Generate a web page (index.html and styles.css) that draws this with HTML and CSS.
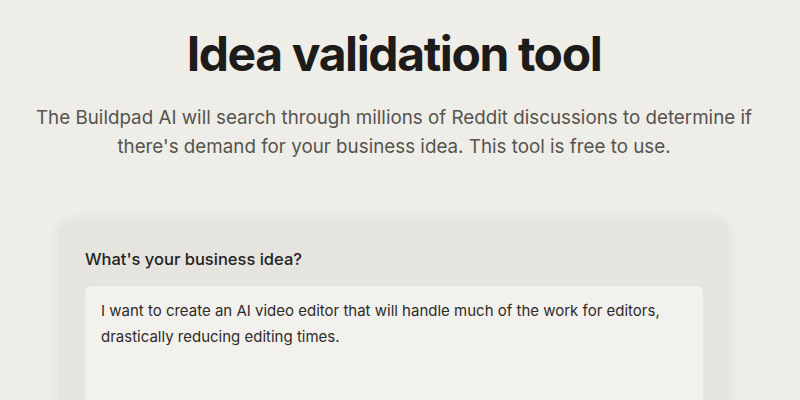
FILE: index.html
```html
<!DOCTYPE html>
<html lang="en">
<head>
<meta charset="utf-8">
<link rel="stylesheet" href="styles.css">
</head>
<body>
<main class="page">
  <h1 class="title">Idea validation tool</h1>
  <p class="lead">The Buildpad AI will search through millions of Reddit discussions to determine if there's demand for your business idea. This tool is free to use.</p>
  <section class="card">
    <label class="label" for="idea">What's your business idea?</label>
    <div class="field" id="idea">I want to create an AI video editor that will handle much of the work for editors, drastically reducing editing times.</div>
  </section>
</main>
</body>
</html>
```
FILE: styles.css
```css
html, body {
  margin: 0;
  padding: 0;
  background: #eeede7;
  height: 100%;
  overflow: hidden;
}
body {
  font-family: Inter, "Open Sans", sans-serif;
  color: #1c1b19;
}
.page {
  display: flex;
  flex-direction: column;
  align-items: center;
  padding: 24px 12px 0 0;
}
.title {
  margin: 0;
  font-size: 48px;
  font-weight: 700;
  letter-spacing: -1.4px;
  line-height: 60px;
  color: #1d1c1a;
}
.lead {
  margin: 19px 0 0;
  width: 760px;
  text-align: center;
  font-size: 18.8px;
  line-height: 29px;
  color: #55544f;
}
.card {
  margin-top: 62px;
  width: 664px;
  box-sizing: border-box;
  padding: 24px 23px 0;
  background: #e6e4de;
  border-radius: 12px;
  box-shadow: 0 0 10px 3px rgba(205, 203, 195, 0.45);
  display: flex;
  flex-direction: column;
  gap: 15px;
  height: 240px;
}
.label {
  font-size: 16.5px;
  font-weight: 500;
  color: #24231f;
  line-height: 24px;
}
.field {
  background: #f3f1ed;
  border-radius: 6px;
  padding: 12px 16px;
  font-size: 15px;
  line-height: 26px;
  color: #2d2c29;
  height: 200px;
}
```
